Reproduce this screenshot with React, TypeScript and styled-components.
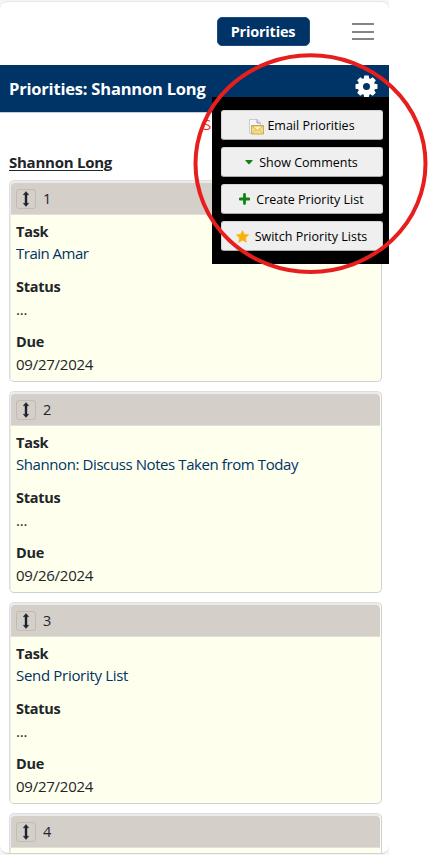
import React from "react";
import styled, { createGlobalStyle } from "styled-components";

const GlobalStyle = createGlobalStyle`
  * { box-sizing: border-box; }
  body { margin: 0; background: #fff; overflow: hidden; }
`;

const Page = styled.div`
  position: relative;
  width: 428px;
  height: 855px;
  overflow: hidden;
  background: #fff;
  font-family: "Open Sans", "Noto Sans", sans-serif;
  font-size: 15px;
  color: #212529;
`;

const Backdrop = styled.div`
  width: 389px;
  height: 855px;
  padding: 1px 0;
  background: #f5f5f5;
`;

const Panel = styled.div`
  position: relative;
  height: 853px;
  overflow: hidden;
  background: #fff;
  border-top: 1px solid #e6e6e6;
  border-bottom: 1px solid #d2d2d6;
  border-radius: 8px;
`;

const TopBar = styled.header`
  display: flex;
  justify-content: flex-end;
  align-items: flex-start;
  height: 63px;
  padding: 15px 15px 0 0;
  gap: 42px;
`;

const PageButton = styled.button`
  width: 93px;
  height: 29px;
  padding: 0 1px 1px 0;
  border: 1px solid #1d497b;
  border-radius: 5px;
  background: #003366;
  color: #fff;
  font: 700 14.5px "Open Sans", sans-serif;
  letter-spacing: -0.2px;
`;

const Hamburger = styled.div`
  display: flex;
  flex-direction: column;
  justify-content: space-between;
  width: 22px;
  height: 17px;
  margin-top: 6px;
  & > i { height: 2px; background: #858585; }
`;

const TitleBar = styled.div`
  display: flex;
  align-items: center;
  justify-content: space-between;
  height: 48px;
  padding: 0 11px 0 9px;
  background: #003366;
  border-bottom: 1px solid #c3cedb;
  color: #fff;
`;

const Title = styled.h1`
  margin: 0;
  font-size: 16.5px;
  line-height: 24px;
  font-weight: 700;
  letter-spacing: -0.2px;
  white-space: nowrap;
`;

const Gear = styled.svg`
  width: 23px;
  height: 23px;
  margin-bottom: 5px;
`;

const Notice = styled.div`
  height: 24px;
  padding-left: 203px;
  color: #ff1a1a;
  line-height: 23px;
`;

const Owner = styled.div`
  height: 24px;
  margin: 13px 0 6px 9px;
  font-size: 15px;
  font-weight: 700;
  line-height: 24px;
  letter-spacing: -0.25px;
  text-decoration: underline;
  text-decoration-thickness: 1px;
  text-underline-offset: 2px;
`;

const List = styled.div`
  display: flex;
  flex-direction: column;
  gap: 9px;
  padding: 0 7px 0 9px;
`;

const Card = styled.article`
  flex: none;
  height: 202px;
  padding: 2px 1px 0;
  border: 1px solid #cfd0d3;
  border-top-color: #dedede;
  border-left-color: #dedede;
  border-radius: 5px;
  background: #ffffed;
  box-shadow: inset 1px 2px 0 #ebebeb;
`;

const CardHead = styled.div`
  display: flex;
  align-items: center;
  gap: 7px;
  height: 32px;
  padding-left: 5px;
  background: #d4cfc8;
  border-bottom: 1px solid #e2dfd8;
  border-radius: 4px 4px 0 0;
  font-size: 14.5px;
`;

const Handle = styled.span`
  display: flex;
  align-items: center;
  justify-content: center;
  width: 20px;
  height: 20px;
  border: 1px solid #c2bbae;
  border-radius: 3px;
`;

const Field = styled.div`
  height: 45px;
  margin: 5px 0 0 5px;
  & + & { margin-top: 10px; }
`;

const Label = styled.div`
  font-size: 14.5px;
  font-weight: 700;
  line-height: 23px;
  letter-spacing: -0.25px;
`;

const Value = styled.div<{ $link?: boolean; $track?: number }>`
  font-size: 15px;
  line-height: ${(p) => (p.$link ? 20 : 22)}px;
  white-space: nowrap;
  letter-spacing: ${(p) => p.$track ?? -0.25}px;
  color: ${(p) => (p.$link ? "#003366" : "#212529")};
`;

const Menu = styled.div`
  position: absolute;
  left: 212px;
  top: 97px;
  display: flex;
  flex-direction: column;
  gap: 7px;
  width: 177px;
  height: 167px;
  padding: 13px 6px 0 9px;
  background: #000;
`;

const MenuButton = styled.button<{ $gap: number }>`
  display: flex;
  align-items: center;
  justify-content: center;
  gap: ${(p) => p.$gap}px;
  width: 162px;
  height: 30px;
  padding: 0 1px 0 0;
  border: 1px solid #d5d5d5;
  border-bottom-color: #aaa;
  border-radius: 3px;
  background: #efefef;
  color: #000;
  font: 400 12.5px "Open Sans", sans-serif;
  white-space: nowrap;
`;

const MenuText = styled.span`
  padding-top: 1px;
`;

const Highlight = styled.svg`
  position: absolute;
  inset: 0;
  pointer-events: none;
`;

const MailIcon = () => (
  <svg width="16" height="16" viewBox="0 0 16 16" transform="translate(0 2)">
    <path d="M1.500.5H9L12.500 4V14.500H1.500Z" fill="#f4f7fc" stroke="#c5cddb" />
    <path d="M9 .5V4h3.500" fill="#d5deee" stroke="#91a3c4" />
    <path d="M3.500 6.500h12v8.500h-12Z" fill="#f7dc83" stroke="#cfaa52" />
    <path d="M4 7h11L9.500 11.500Z" fill="#fff2b8" stroke="#cba64c" strokeWidth=".8" />
    <path d="M4 14.500l4-4M15 14.500l-4-4" stroke="#d5b35f" strokeWidth=".7" />
  </svg>
);

const CaretIcon = () => (
  <svg width="8" height="14" viewBox="0 0 8 14">
    <path d="M.8 5h6.400q.8 0 .3.700L4.600 8.900q-.6.600-1.200 0L.5 5.700Q0 5 .8 5Z" fill="#128212" />
  </svg>
);

const PlusIcon = () => (
  <svg width="11" height="12" viewBox="0 0 11 12">
    <path d="M5.500 1.500v9M1 6h9" stroke="#128212" strokeWidth="2.800" strokeLinecap="round" />
  </svg>
);

const StarIcon = () => (
  <svg width="13" height="13" viewBox="0 0 13 13">
    <path d="M6.500.4 8.300 4.300 12.700 4.800 9.500 7.900 10.300 12.300 6.500 10.200 2.700 12.300 3.500 7.900.3 4.800 4.700 4.300Z" fill="#fcb10a" stroke="#fcb10a" strokeWidth=".5" strokeLinejoin="round" />
  </svg>
);

const ArrowIcon = () => (
  <svg width="8" height="16" viewBox="0 0 8 16">
    <path d="M4 .5 6.800 3.800H5V12.200H6.800L4 15.500 1.200 12.200H3V3.800H1.200Z" fill="#1b2230" stroke="#1b2230" strokeWidth=".4" strokeLinejoin="round" />
  </svg>
);

const tasks = [
  { id: 1, task: "Train Amar", due: "09/27/2024", track: -0.5 },
  { id: 2, task: "Shannon: Discuss Notes Taken from Today", due: "09/26/2024", track: -0.41 },
  { id: 3, task: "Send Priority List", due: "09/27/2024", track: -0.31 },
  { id: 4, task: "", due: "", track: 0 },
];

const actions = [
  { icon: <MailIcon />, text: "Email Priorities", gap: 3 },
  { icon: <CaretIcon />, text: "Show Comments", gap: 6 },
  { icon: <PlusIcon />, text: "Create Priority List", gap: 6 },
  { icon: <StarIcon />, text: "Switch Priority Lists", gap: 6 },
];

export default function App() {
  return (
    <Page>
      <GlobalStyle />
      <Backdrop>
        <Panel>
          <TopBar>
            <PageButton>Priorities</PageButton>
            <Hamburger><i /><i /><i /></Hamburger>
          </TopBar>
          <TitleBar>
            <Title>Priorities: Shannon Long</Title>
            <Gear viewBox="-11.500 -11.500 23 23">
              <g fill="#fff">
                {[0, 45, 90, 135].map((a) => (
                  <path key={a} transform={`rotate(${a})`} d="M-2.200-11H2.200L3-7V7L2.200 11H-2.200L-3 7V-7Z" />
                ))}
                <circle r="8.600" />
              </g>
              <circle r="3.500" fill="#003366" />
            </Gear>
          </TitleBar>
          <Notice>S</Notice>
          <Owner>Shannon Long</Owner>
          <List>
            {tasks.map((t) => (
              <Card key={t.id}>
                <CardHead>
                  <Handle><ArrowIcon /></Handle>
                  <span>{t.id}</span>
                </CardHead>
                {t.task && (
                  <>
                    <Field><Label>Task</Label><Value $link $track={t.track}>{t.task}</Value></Field>
                    <Field><Label>Status</Label><Value>...</Value></Field>
                    <Field><Label>Due</Label><Value>{t.due}</Value></Field>
                  </>
                )}
              </Card>
            ))}
          </List>
        </Panel>
      </Backdrop>
      <Menu>
        {actions.map((a) => (
          <MenuButton key={a.text} $gap={a.gap}>
            {a.icon}
            <MenuText>{a.text}</MenuText>
          </MenuButton>
        ))}
      </Menu>
      <Highlight width="428" height="855" viewBox="0 0 428 855">
        <ellipse cx="310.500" cy="163.600" rx="115" ry="108.300" fill="none" stroke="#e71e1e" strokeWidth="4" />
      </Highlight>
    </Page>
  );
}
